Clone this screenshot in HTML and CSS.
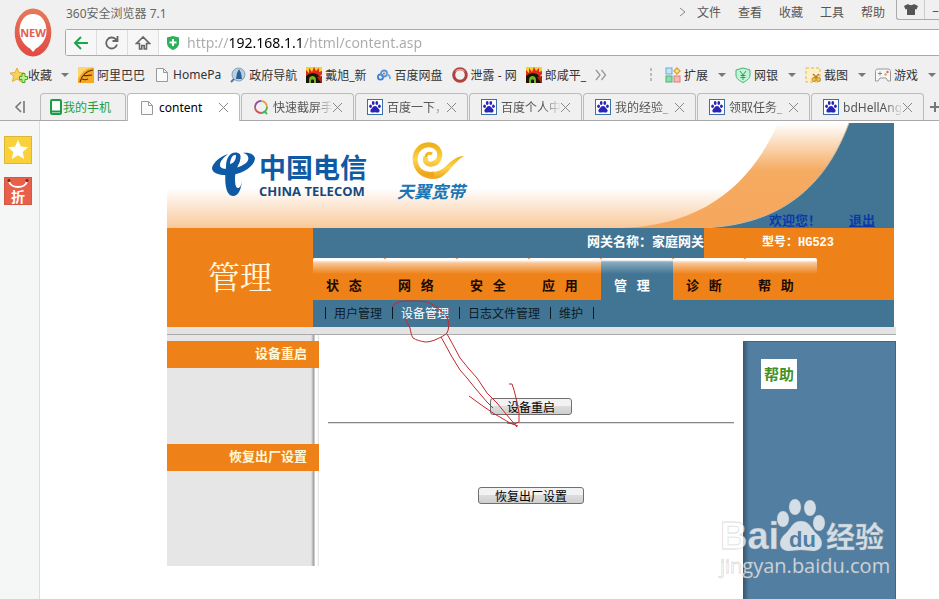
FILE: index.html
```html
<!DOCTYPE html>
<html lang="zh-CN">
<head>
    <meta charset="UTF-8">
    <meta name="viewport" content="width=device-width, initial-scale=1.0">
    <title>content</title>
    <link rel="stylesheet" href="styles.css">
</head>
<body>

<!-- shared icons -->
<svg class="sprite" aria-hidden="true">
    <symbol id="paw" viewBox="0 0 16 16">
        <rect x="0.5" y="0.5" width="15" height="15" fill="#fff" stroke="#3b6fa8"/>
        <g fill="#2a25b8">
            <ellipse cx="3.6" cy="7.2" rx="1.4" ry="1.8"/>
            <ellipse cx="6.2" cy="4" rx="1.4" ry="1.9"/>
            <ellipse cx="9.8" cy="4" rx="1.4" ry="1.9"/>
            <ellipse cx="12.4" cy="7.2" rx="1.4" ry="1.8"/>
            <path d="M8 7c2 0 2.4 1.8 3.8 3 1.500 1.400.8 3.600-1 3.600-1 0-1.800-.4-2.800-.4s-1.800.4-2.800.4c-1.800 0-2.500-2.200-1-3.600C5.600 8.800 6 7 8 7z"/>
        </g>
    </symbol>
    <symbol id="page" viewBox="0 0 16 16">
        <path d="M2.500 1.500h7l4 4v9h-11zM9.500 1.500v4h4" fill="#fafafa" stroke="#999"/>
    </symbol>
    <symbol id="sina" viewBox="0 0 16 16">
        <rect width="16" height="16" fill="#f6d02c"/>
        <path d="M0 3l3 3 0-5 3 4 2-5 2 4 3-3v4l3-1v3l-3 3H0z" fill="#e02a1c"/>
        <path d="M0 16V9l3-2 4-1 4 1 3 3 2 6z" fill="#1d1206"/>
        <path d="M3 16v-3c0-3 1.500-4 3.500-4s3.500 1.500 3.500 4v3H8v-2.500C8 12 5 12 5 13.500V16z" fill="#6db52c"/>
        <path d="M11 10l4 6h1V9z" fill="#b51d18"/>
    </symbol>
</svg>

<header class="browser">
    <div class="top">
        <svg class="new-badge" viewBox="0 0 38 50">
            <defs>
                <linearGradient id="new-fill" x1="0" y1="0" x2="0" y2="1">
                    <stop offset="0" stop-color="#e8785a"/>
                    <stop offset="1" stop-color="#e04a42"/>
                </linearGradient>
            </defs>
            <ellipse cx="19" cy="24.500" rx="18.300" ry="24" fill="url(#new-fill)"/>
            <path d="M19 6C10.500 6 5.500 13.500 5.500 23c0 9 6 15 10.500 17.500L19 44l3-3.500C26.500 38 32.500 32 32.500 23 32.500 13.500 27.500 6 19 6z" fill="#fff"/>
            <text x="19" y="29" text-anchor="middle" class="new-text">NEW</text>
        </svg>
        <div class="top-main">
            <div class="title-row">
                <span class="app-name">360安全浏览器 7.1</span>
                <nav class="menu">
                    <svg width="8" height="10" viewBox="0 0 8 10"><path d="M1 1l5 4-5 4" fill="none" stroke="#888"/></svg>
                    <a href="#">文件</a>
                    <a href="#">查看</a>
                    <a href="#">收藏</a>
                    <a href="#">工具</a>
                    <a href="#">帮助</a>
                </nav>
                <div class="window-box">
                    <button class="skin" aria-label="皮肤">
                        <svg width="14" height="13" viewBox="0 0 14 13"><path d="M4 1c1 1.500 5 1.500 6 0l4 2-1.500 3.500L11 6v6H3V6l-1.500.5L0 3z" fill="#555"/></svg>
                    </button>
                    <button class="minimize" aria-label="最小化">–</button>
                </div>
            </div>
            <div class="address">
                <button aria-label="后退"><svg width="16" height="14" viewBox="0 0 16 14"><path d="M8 1L2 7l6 6M2 7h13" fill="none" stroke="#1ea550" stroke-width="2"/></svg></button>
                <button aria-label="刷新"><svg width="16" height="16" viewBox="0 0 16 16"><path d="M13 9.500A5.500 5.500 0 1 1 11.500 4L13 5.500M13.500 1v5h-5" fill="none" stroke="#666" stroke-width="1.800"/></svg></button>
                <button aria-label="主页"><svg width="16" height="16" viewBox="0 0 16 16"><path d="M8 2L1.500 8.500H4.500V14h2.300v-3.500h2.400V14h2.300V8.500h3z" fill="none" stroke="#666" stroke-width="1.600"/></svg></button>
                <svg class="shield" width="14" height="14" viewBox="0 0 14 14"><path d="M1 1.500L7 0l6 1.500V7c0 3.500-3 6-6 7-3-1-6-3.500-6-7z" fill="#2fae5b"/><path d="M7 3v7M3.500 6.500h7" stroke="#fff" stroke-width="2"/></svg>
                <input class="url" type="text" aria-label="地址" value="http://192.168.1.1/html/content.asp">
            </div>
        </div>
    </div>

    <div class="bookmarks">
        <a href="#" class="fav"><svg width="18" height="16" viewBox="0 0 18 16"><path d="M7 1l2 4.500 5 .5-4 3.500 1 5-4-2.500-4.500 2.500 1-5L0 6l5-.5z" fill="#f8d05a" stroke="#d9a62c" stroke-width=".8"/><path d="M12 6.500h3v3h2.500v3H15v3h-3v-3H9.500v-3H12z" fill="#b9f08a" stroke="#49a52a"/></svg>收藏</a>
        <span class="arrow fav-arrow"></span>
        <a href="#"><svg width="16" height="16" viewBox="0 0 16 16"><rect width="16" height="16" fill="#f6a823"/><path d="M0 12C5 3 9 1 16 1V0H0z" fill="#fcd670"/><path d="M2 15C4 8 8 4 15 3M6 8.500c3 .5 5-.5 8-.5M4 12c2 1 4 1 6 0" fill="none" stroke="#5b3206" stroke-width="1.200"/></svg>阿里巴巴</a>
        <a href="#"><svg width="16" height="16"><use href="#page"/></svg>HomePa</a>
        <a href="#"><svg width="16" height="16" viewBox="0 0 16 16"><circle cx="8.500" cy="7.500" r="6.500" fill="#b9d0e2" stroke="#7fa3c2"/><path d="M9 2l2 4 1 6H6l1-6z" fill="#2d5f8f"/><path d="M4 12l-3 3" stroke="#4c7ca6" stroke-width="2"/></svg>政府导航</a>
        <a href="#"><svg width="16" height="16"><use href="#sina"/></svg>戴旭_新</a>
        <a href="#"><svg width="16" height="16" viewBox="0 0 16 16"><g fill="none" stroke-width="1.800"><circle cx="4.500" cy="10" r="2.600" stroke="#3b7fd0"/><circle cx="8" cy="6.500" r="3" stroke="#5b93d0"/><path d="M10 8c2-1 4 0 4 4" stroke="#5fabe6"/></g><circle cx="8" cy="6.500" r="1.100" fill="#e35d5b"/></svg>百度网盘</a>
        <a href="#"><svg width="16" height="16" viewBox="0 0 16 16"><circle cx="8" cy="8" r="6.300" fill="none" stroke="#b0413e" stroke-width="3"/><path d="M3.500 4.500a6 6 0 0 1 9 0" fill="none" stroke="#dd9d99" stroke-width="1.500"/></svg>泄露 - 网</a>
        <a href="#"><svg width="16" height="16"><use href="#sina"/></svg>郎咸平_</a>
        <svg width="12" height="12" viewBox="0 0 12 12"><path d="M1 1l4 5-4 5M6.500 1l4 5-4 5" fill="none" stroke="#999" stroke-width="1.300"/></svg>

        <div class="tools">
            <svg width="4" height="14" viewBox="0 0 4 14" fill="#bbb"><rect x="1" width="2" height="3"/><rect x="1" y="5" width="2" height="3"/><rect x="1" y="10" width="2" height="3"/></svg>
            <a href="#"><svg width="16" height="16" viewBox="0 0 16 16"><rect x="1" y="1" width="6" height="6" fill="#c6e2f7" stroke="#6aa9d8"/><rect x="1" y="9" width="6" height="6" fill="#8fdcae" stroke="#46b36f"/><rect x="9" y="9" width="6" height="6" fill="#f7b7b7" stroke="#df7c7c"/><path d="M12 1l3 3-3 3-3-3z" fill="#fbe3a0" stroke="#e0a030" stroke-width="1.300"/></svg>扩展<span class="arrow"></span></a>
            <a href="#"><svg width="16" height="16" viewBox="0 0 16 16"><path d="M1 3l7-2 7 2v5c0 4-4 6-7 7.500C5 14 1 12 1 8z" fill="#c3f2d6" stroke="#3fb673"/><path d="M5 4l3 4 3-4M8 8v5M5.500 8.500h5M5.500 10.500h5" fill="none" stroke="#2aa35e"/></svg>网银<span class="arrow"></span></a>
            <a href="#"><svg width="16" height="16" viewBox="0 0 16 16"><rect x="1" y="1" width="14" height="14" fill="#fbf0c8" stroke="#e2b44c" stroke-dasharray="3 2"/><path d="M8 7l4 4M14 7l-4 4" stroke="#b87d1c" stroke-width="1.500"/><circle cx="9" cy="12.500" r="2" fill="#f2c14c" stroke="#c58a20"/><circle cx="13.500" cy="12.500" r="2" fill="#f2c14c" stroke="#c58a20"/></svg>截图<span class="arrow"></span></a>
            <a href="#"><svg width="16" height="16" viewBox="0 0 16 16"><path d="M3 2h10c1.500 0 2.500 1 2.500 2.500V14h-2.500l-2-3H5l-2 3H.5V4.500C.5 3 1.500 2 3 2z" fill="#f7f7f7" stroke="#999"/><path d="M3 6.500h4M5 4.500v4" stroke="#888"/><circle cx="12.500" cy="5" r="1.200" fill="#df6a5a"/><circle cx="10.500" cy="7.500" r="1.200" fill="#e0a24a"/></svg>游戏<span class="arrow"></span></a>
        </div>
    </div>

    <div class="tabs">
        <button class="tab-scroll" aria-label="收起"><svg width="12" height="12" viewBox="0 0 12 12"><path d="M7 1L2 6l5 5M10 0v12" fill="none" stroke="#777" stroke-width="1.600"/></svg></button>
        <a href="#" class="tab phone"><svg width="12" height="16" viewBox="0 0 12 16"><rect x="1" y="1" width="10" height="14" rx="1" fill="#fff" stroke="#1d9e44" stroke-width="2"/><path d="M1 12.500h10" stroke="#1d9e44" stroke-width="2"/></svg>我的手机</a>
        <a href="#" class="tab active"><svg width="16" height="16"><use href="#page"/></svg><span class="tab-title">content</span><span class="close"></span></a>
        <a href="#" class="tab"><svg width="16" height="16" viewBox="0 0 16 16" fill="none" stroke-width="1.800"><path d="M8 2a6 6 0 0 1 6 6" stroke="#e2a13c"/><path d="M14 8a6 6 0 0 1-6 6" stroke="#4bb05a"/><path d="M8 14a6 6 0 0 1-6-6" stroke="#d9505a"/><path d="M2 8a6 6 0 0 1 6-6" stroke="#8f4fa8"/><path d="M12 13l2 2" stroke="#4bb05a"/></svg><span class="tab-title">快速截屏手</span><span class="close"></span></a>
        <a href="#" class="tab"><svg width="16" height="16"><use href="#paw"/></svg><span class="tab-title">百度一下，</span><span class="close"></span></a>
        <a href="#" class="tab"><svg width="16" height="16"><use href="#paw"/></svg><span class="tab-title">百度个人中</span><span class="close"></span></a>
        <a href="#" class="tab"><svg width="16" height="16"><use href="#paw"/></svg><span class="tab-title">我的经验_</span><span class="close"></span></a>
        <a href="#" class="tab"><svg width="16" height="16"><use href="#paw"/></svg><span class="tab-title">领取任务_</span><span class="close"></span></a>
        <a href="#" class="tab"><svg width="16" height="16"><use href="#paw"/></svg><span class="tab-title">bdHellAng</span><span class="close"></span></a>
        <button class="new-tab" aria-label="新标签"><svg width="12" height="12" viewBox="0 0 12 12"><path d="M6 1v10M1 6h10" stroke="#777" stroke-width="2"/></svg></button>
    </div>
</header>

<div class="view">
    <aside class="side">
        <a href="#" aria-label="收藏夹"><svg width="28" height="28" viewBox="0 0 28 28"><rect x=".5" y=".5" width="27" height="27" fill="#fbd13a" stroke="#dcb53c"/><path d="M14 4l2.900 6.500 7.100.7-5.300 4.700 1.500 7L14 19.300 7.800 22.900l1.500-7L4 11.200l7.100-.7z" fill="#fff"/></svg></a>
        <a href="#" aria-label="折扣"><svg width="28" height="28" viewBox="0 0 28 28"><rect x=".5" y=".5" width="27" height="27" fill="#e9604a" stroke="#cf5a45"/><path d="M5 4c1 8 17 8 18 0" fill="none" stroke="#fff" stroke-width="2"/><circle cx="5" cy="3.500" r="1.500" fill="#7c2418"/><circle cx="23" cy="3.500" r="1.500" fill="#7c2418"/><text x="14" y="25" text-anchor="middle" class="sale-text">折</text></svg></a>
    </aside>

    <main class="page">
        <div class="banner">
            <div class="telecom">
                <svg width="44" height="46" viewBox="0 0 44 46">
                    <g fill="#0f5aa5">
                        <path d="M17 3C8 6 2 12 1 17c0 5 7 8 20 7 12-2 22-9 23-16 0-4-5-7-12-6 5 1 7 5 4 9-4 4-12 7-19 7-5 0-8-1-8-4 0-4 4-8 8-11z"/>
                        <path d="M27 2c-7-2-12 4-12 14-1 8-1 16 0 20 1 6 4 9 7 9 5 0 8-6 9-15-1 5-2 7-4 7s-3-3-3-9c0-8 3-13 5-18 1-4 1-7-2-8z"/>
                    </g>
                    <path d="M24 4c-3 0-5 5-5 9 4-1 6-4 6-9z" fill="#fff"/>
                </svg>
                <div class="telecom-name">
                    <div class="telecom-cn">中国电信</div>
                    <div class="telecom-en">CHINA TELECOM</div>
                </div>
            </div>
            <div class="tianyi">
                <svg width="56" height="40" viewBox="0 0 56 40">
                    <defs>
                        <linearGradient id="gold" x1="0" y1="0" x2="0" y2="1">
                            <stop offset="0" stop-color="#efb01d"/>
                            <stop offset=".5" stop-color="#fbd54a"/>
                            <stop offset="1" stop-color="#eea41b"/>
                        </linearGradient>
                    </defs>
                    <path d="M6 27c3 7 10 11 18 11 14 0 17-14 31-23-7 0-13 5-18 10-4 4-9 6-15 6-6 0-12-1-16-4z" fill="url(#gold)"/>
                    <path d="M17 16c-2 4 1 8 6 7 7-1 9-8 7-13C27 3 17 2 11 7 4 13 5 24 11 30c4 3 9 4 14 3" fill="none" stroke="url(#gold)" stroke-width="5"/>
                    <path d="M17 16c0-3 3-5 6-3" fill="none" stroke="#f3b722" stroke-width="3"/>
                </svg>
                <div class="tianyi-name">天翼宽带</div>
            </div>
            <svg class="swoosh" viewBox="0 0 294 105" preserveAspectRatio="none">
                <defs>
                    <linearGradient id="peach" x1="0" y1="0" x2="0" y2="1">
                        <stop offset="0" stop-color="#fff"/>
                        <stop offset=".45" stop-color="#f5ab62"/>
                        <stop offset="1" stop-color="#f5a75c"/>
                    </linearGradient>
                </defs>
                <path d="M178 0C150 64 100 103 20 105H110C185 98 236 64 249 0z" fill="url(#peach)"/>
                <path d="M249 0C225 64 180 103 100 105H294V0z" fill="#427594"/>
                <path d="M249 0C225 64 180 103 100 105" fill="none" stroke="#c9bda5"/>
            </svg>
            <div class="welcome">
                <span>欢迎您！</span>
                <a href="#">退出</a>
            </div>
        </div>

        <div class="heading">
            <h1>管理</h1>
            <div class="heading-main">
                <div class="info">
                    <div class="gateway">网关名称：家庭网关</div>
                    <div class="model">型号：HG523</div>
                </div>
                <nav class="nav">
                    <a href="#">状&nbsp;&nbsp;&nbsp;态</a>
                    <a href="#">网&nbsp;&nbsp;&nbsp;络</a>
                    <a href="#">安&nbsp;&nbsp;&nbsp;全</a>
                    <a href="#">应&nbsp;&nbsp;&nbsp;用</a>
                    <a href="#" class="current">管&nbsp;&nbsp;&nbsp;理</a>
                    <a href="#">诊&nbsp;&nbsp;&nbsp;断</a>
                    <a href="#">帮&nbsp;&nbsp;&nbsp;助</a>
                </nav>
                <nav class="subnav">
                    <a href="#">用户管理</a>
                    <a href="#" class="current">设备管理</a>
                    <a href="#">日志文件管理</a>
                    <a href="#">维护</a>
                </nav>
            </div>
        </div>

        <div class="divider"></div>

        <div class="body">
            <div class="labels">
                <div class="label">设备重启</div>
                <div class="label">恢复出厂设置</div>
            </div>
            <div class="actions">
                <button class="btn">设备重启</button>
                <hr>
                <button class="btn wide">恢复出厂设置</button>
            </div>
            <div class="help">
                <a href="#">帮助</a>
            </div>
        </div>

        <!-- hand-drawn hint -->
        <svg class="hint" width="140" height="140" viewBox="386 294 140 140">
            <g fill="none" stroke="#c4282c">
                <path d="M393 307c0-4 8-6 14-6 8 0 15 0 20 1 5 2 9 4 13 8 4 3 7 6 8 10 1 5 1 9-1 13-3 3-6 4-10 6-4 2-8 3-12 3-5-1-9-2-12-4-2-3-2-6-3-10-2-4-4-7-5-11"/>
                <path d="M441 337l5 9 6 11 8 13 7 8 8 10 12 14 6 6"/>
                <path d="M447 334l5 9 8 15 9 11 8 9 10 15 10 10 9 11 11 13"/>
                <path d="M469 396l11 8 13 9 17 10 8 3"/>
                <path d="M509 384h3l2 6 3 12 2 11v9l-5 2-7-1"/>
            </g>
        </svg>
    </main>

    <svg class="watermark" width="180" height="90" viewBox="0 0 180 90">
        <g fill="#fff" fill-opacity=".75" stroke="#999" stroke-opacity=".35" stroke-width=".8">
            <text x="4" y="54" class="wm-bai">Bai</text>
            <ellipse cx="67" cy="24" rx="6" ry="8"/>
            <ellipse cx="79" cy="12" rx="6" ry="8"/>
            <ellipse cx="94" cy="13" rx="6" ry="8"/>
            <ellipse cx="103" cy="28" rx="6" ry="8"/>
            <path d="M85 26c9 0 10 8 16 13 8 7 6 17-4 17-5 0-7-1-12-1s-7 1-12 1c-10 0-12-10-4-17 6-5 7-13 16-13z"/>
            <text x="110" y="53" class="wm-cn">经验</text>
            <text x="4" y="78" class="wm-url">jingyan.baidu.com</text>
        </g>
        <text x="73" y="52" class="wm-du">du</text>
    </svg>
</div>

</body>
</html>
```

FILE: styles.css
```css
* {
    box-sizing: border-box;
}
body {
    margin: 0;
    height: 100vh;
    display: flex;
    flex-direction: column;
    overflow: hidden;
    background: #fff;
    font-family: "Noto Sans", "Noto Sans CJK SC", sans-serif;
    font-size: 12px;
    color: #333;
}
a {
    color: inherit;
    text-decoration: none;
}
button {
    padding: 0;
    border: none;
    background: none;
    font-family: inherit;
}
svg {
    flex: none;
    display: block;
}
.sprite {
    position: absolute;
    width: 0;
    height: 0;
}

/* browser window */
.browser {
    flex: none;
    background: #f0f0f0;
}
.top {
    display: flex;
    height: 56px;
}
.new-badge {
    width: 38px;
    height: 50px;
    margin: 8px 13px 0 14px;
}
.new-text {
    font: bold 11px "Open Sans", sans-serif;
    fill: #e2604e;
}
.top-main {
    flex: 1;
    min-width: 0;
}
.title-row {
    display: flex;
    align-items: center;
    height: 29px;
}
.app-name {
    padding: 0 0 4px 1px;
    color: #666;
}
.menu {
    display: flex;
    align-items: center;
    gap: 17px;
    height: 23px;
    margin: 0 11px 0 auto;
    align-self: flex-start;
    color: #555;
}
.menu svg {
    margin-right: -7px;
}
.window-box {
    display: flex;
    align-self: flex-start;
    width: 43px;
    height: 20px;
    border: 1px solid #aaa;
    border-width: 0 0 1px 1px;
    border-bottom-left-radius: 3px;
}
.skin {
    display: flex;
    justify-content: center;
    width: 28px;
    padding-top: 3px;
    border-right: 1px solid #ccc;
}
.minimize {
    flex: 1;
    text-align: right;
    color: #555;
}
.address {
    display: flex;
    align-items: center;
    height: 27px;
    border: 1px solid #aaa;
    border-right: none;
    border-radius: 3px 0 0 3px;
    background: #fff;
}
.address button {
    display: flex;
    align-items: center;
    justify-content: center;
    width: 31px;
    height: 25px;
    background: #f7f7f7;
    border-right: 1px solid #ddd;
}
.shield {
    margin: 0 7px;
}
/* only the host part of the address is dark */
.url {
    flex: 1;
    min-width: 0;
    height: 25px;
    padding: 0;
    border: none;
    font: 14px "Noto Sans", sans-serif;
    color: transparent;
    background: linear-gradient(to right, #aaa 42px, #000 42px, #000 115px, #aaa 115px);
    -webkit-background-clip: text;
    background-clip: text;
}

/* bookmarks */
.bookmarks {
    display: flex;
    align-items: center;
    height: 37px;
    padding-left: 10px;
    gap: 9px;
}
.bookmarks a {
    display: flex;
    align-items: center;
    gap: 3px;
    white-space: nowrap;
}
.bookmarks .fav {
    gap: 0;
}
.arrow {
    border: 4px solid transparent;
    border-top-color: #777;
    border-bottom: none;
}
.tools {
    display: flex;
    align-items: center;
    gap: 9px;
    margin-left: auto;
    padding-right: 3px;
}
.tools svg:first-child {
    margin-right: 3px;
}
.tools a svg:first-child {
    margin-right: 0;
}
.tools .arrow {
    margin-left: 7px;
}

/* tabs */
.tabs {
    display: flex;
    align-items: stretch;
    gap: 1px;
    height: 28px;
    border-bottom: 1px solid #aaa;
}
.tab-scroll {
    display: flex;
    flex: none;
    align-items: center;
    width: 39px;
    padding-left: 14px;
}
.tab {
    display: flex;
    flex: none;
    align-items: center;
    gap: 4px;
    width: 113px;
    padding: 0 11px;
    border: 1px solid #bbb;
    border-bottom: none;
    border-radius: 4px 4px 0 0;
    color: #555;
}
.tab.phone {
    width: 86px;
    padding: 0 9px;
    gap: 1px;
    color: #1d9e44;
    white-space: nowrap;
}
.tab.active {
    margin-bottom: -1px;
    background: #fff;
    color: #000;
}
.tab-title {
    flex: 1;
    min-width: 0;
    margin-right: -4px;
    overflow: hidden;
    white-space: nowrap;
    -webkit-mask-image: linear-gradient(to right, #000 42px, transparent 60px);
    mask-image: linear-gradient(to right, #000 42px, transparent 60px);
}
.tab.active .tab-title {
    -webkit-mask-image: none;
    mask-image: none;
}
.close {
    width: 9px;
    height: 9px;
    background:
        linear-gradient(45deg, transparent 45%, #888 45%, #888 55%, transparent 55%),
        linear-gradient(-45deg, transparent 45%, #888 45%, #888 55%, transparent 55%);
}
.new-tab {
    flex: none;
    padding-left: 4px;
}

/* content area */
.view {
    position: relative;
    display: flex;
    flex: 1;
    min-height: 0;
}
.side {
    flex: none;
    display: flex;
    flex-direction: column;
    gap: 13px;
    width: 40px;
    padding: 15px 4px;
    background: #f5f6f6;
    border-right: 1px solid #ddd;
}
.sale-text {
    font: bold 14px "Noto Sans CJK SC", sans-serif;
    fill: #fff;
}
.page {
    position: relative;
    display: flex;
    flex-direction: column;
    flex: 0 1 729px;
    margin: 2px 0 0 127px;
}

/* banner */
.banner {
    position: relative;
    display: flex;
    height: 105px;
    margin-right: 2px;
    padding-left: 44px;
    background: linear-gradient(#fff 62%, #f9c89b);
}
.telecom {
    display: flex;
    gap: 4px;
    padding-top: 28px;
    color: #0f5aa5;
}
.telecom-cn {
    font: bold 27px/32px "Noto Sans CJK SC", sans-serif;
}
.telecom-en {
    font: bold 13px/16px "Open Sans", sans-serif;
    color: #17487c;
}
.tianyi {
    margin-left: 30px;
    padding-top: 18px;
}
.tianyi svg {
    margin-left: 12px;
}
.tianyi-name {
    font: italic bold 17px/20px "Noto Sans CJK SC", sans-serif;
    color: #1a76b5;
}
.swoosh {
    position: absolute;
    right: 0;
    top: 0;
    width: 294px;
    height: 105px;
}
.welcome {
    position: absolute;
    right: 19px;
    bottom: 0;
    display: flex;
    gap: 28px;
    font: bold 13px/16px "Noto Sans CJK SC", sans-serif;
    color: #0b3aa8;
}
.welcome a {
    text-decoration: underline;
}

/* heading */
.heading {
    display: flex;
    margin-right: 2px;
    background: #ee8219;
}
h1 {
    width: 146px;
    margin: 0;
    font: 32px/94px "Noto Serif CJK SC", "Noto Sans CJK SC", serif;
    color: #fff8e0;
    text-align: center;
}
.heading-main {
    flex: 1;
}
.info {
    display: flex;
    height: 30px;
    font: bold 13px/30px "Liberation Mono", "Noto Sans CJK SC", monospace;
    color: #fff;
}
.gateway {
    flex: 1;
    background: #427594;
    text-align: right;
}
.model {
    width: 190px;
    padding-left: 58px;
    font-size: 12px;
}
.nav {
    display: flex;
    height: 42px;
}
.nav a {
    width: 72px;
    padding-left: 13px;
    background: linear-gradient(#fff 2px, #f7c698 5px, #ee8219 16px);
    border-radius: 2px 2px 0 0;
    font: bold 13px/55px "Liberation Serif", "Noto Sans CJK SC", serif;
    color: #1a0a00;
}
.nav .current {
    background: linear-gradient(#fff 2px, #8dacbf 4px, #427594 16px);
    color: #fff;
}
.subnav {
    display: flex;
    align-items: center;
    height: 27px;
    padding: 0 0 2px 12px;
    background: #427594;
    font: 12px/12px "Noto Sans CJK SC", sans-serif;
    color: #0c1a24;
}
.subnav a {
    padding: 0 10px 0 8px;
    border-left: 1px solid #0c1a24;
}
.subnav a:last-child {
    border-right: 1px solid #0c1a24;
}
.subnav .current {
    color: #fff;
}
.divider {
    height: 8px;
    background: #e3e3e3;
    border-bottom: 1px solid #aaa;
}

/* main part */
.body {
    display: flex;
    flex: 1;
}
.labels {
    display: flex;
    flex-direction: column;
    align-self: flex-start;
    gap: 76px;
    width: 152px;
    height: 231px;
    padding-top: 6px;
    background: linear-gradient(to right, #e6e6e6 144px, #999 147px, #fff 148px, #fff 150px, #ddd 152px);
}
.label {
    height: 27px;
    padding-right: 12px;
    background: #ee8219;
    font: bold 13px/24px "Noto Sans CJK SC", sans-serif;
    color: #fff8d8;
    text-align: right;
}
.actions {
    flex: 1;
    padding: 63px 9px 0;
    text-align: center;
}
.btn {
    display: block;
    width: 82px;
    height: 17px;
    margin: 0 auto;
    border: 1px solid #707070;
    border-radius: 3px;
    background: linear-gradient(#f2f2f2 50%, #dcdcdc 50%, #cfcfcf);
    font: 12px/15px "Noto Sans CJK SC", sans-serif;
    color: #000;
}
.btn.wide {
    width: 106px;
}
hr {
    height: 2px;
    margin: 7px 0 63px;
    border: none;
    border-top: 1px solid #888;
    border-bottom: 1px solid #ddd;
}
.help {
    width: 153px;
    margin-top: 6px;
    padding: 17px;
    background: linear-gradient(to right, #35566e, #517ea1 6px);
    border: 1px solid #3f6683;
    border-width: 1px 1px 0 0;
}
.help a {
    display: block;
    width: 36px;
    margin-left: 1px;
    background: #fff;
    font: bold 15px/30px "Noto Sans CJK SC", sans-serif;
    color: #3f9128;
    text-align: center;
}

/* drawn over the page */
.hint {
    position: absolute;
    left: 219px;
    top: 171px;
    pointer-events: none;
}
.watermark {
    position: absolute;
    right: 43px;
    bottom: 14px;
    pointer-events: none;
}
.wm-bai {
    font: bold 38px "Liberation Sans", sans-serif;
}
.wm-cn {
    font: bold 29px "Noto Sans CJK SC", sans-serif;
}
.wm-url {
    font: 20px "Open Sans", sans-serif;
}
.wm-du {
    font: bold 22px "Liberation Sans", sans-serif;
    fill: #517ea1;
}
```
